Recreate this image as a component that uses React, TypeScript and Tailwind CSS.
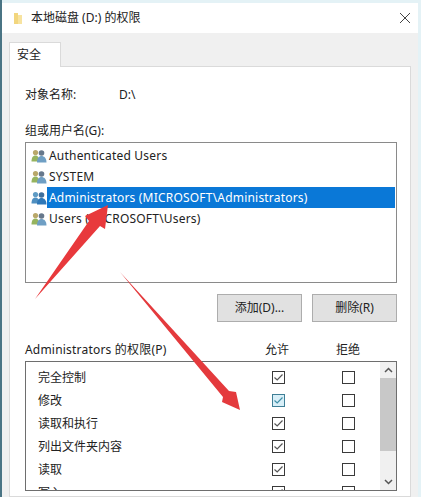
import React from 'react';

const font = { fontFamily: '"Noto Sans", "Noto Sans CJK SC", sans-serif' };

const users = [
  { name: 'Authenticated Users', selected: false },
  { name: 'SYSTEM', selected: false },
  { name: 'Administrators (MICROSOFT\\Administrators)', selected: true },
  { name: 'Users (MICROSOFT\\Users)', selected: false },
];

const perms = [
  { name: '完全控制', hot: false },
  { name: '修改', hot: true },
  { name: '读取和执行', hot: false },
  { name: '列出文件夹内容', hot: false },
  { name: '读取', hot: false },
  { name: '写入', hot: false },
];

const UsersIcon: React.FC<{ selected: boolean }> = ({ selected }) => (
  <svg width="16" height="14" viewBox="0 0 16 14" className="shrink-0">
    <circle cx="4.5" cy="3.5" r="2.6" fill={selected ? '#5f9bc4' : '#b9a86a'} />
    <path d="M0.5 12.5 C0.5 8 2.5 6.5 4.5 6.5 C6.5 6.5 8 8 8 12.5 Z" fill={selected ? '#4f8fc0' : '#96b45f'} />
    <circle cx="10.5" cy="4" r="2.8" fill={selected ? '#3f6f9c' : '#66788c'} />
    <path d="M6 13.5 C6 9 8 7 10.5 7 C13 7 15.5 9 15.5 13.5 Z" fill={selected ? '#2f78b8' : '#6f9fc4'} />
  </svg>
);

const Check: React.FC<{ on: boolean; hot?: boolean }> = ({ on, hot }) => (
  <span
    className={`flex h-[13px] w-[13px] shrink-0 items-center justify-center border ${
      hot ? 'border-[#3f7f96] bg-[#d8eff8]' : 'border-[#3a3a3a] bg-white'
    }`}
  >
    {on && (
      <svg width="11" height="11" viewBox="0 0 11 11" fill="none">
        <path d="M1.5 5.5 L4.2 8 L9.5 2.5" stroke={hot ? '#3f8fa8' : '#555555'} strokeWidth="1.2" />
      </svg>
    )}
  </span>
);

export default function App() {
  return (
    <div className="relative flex h-[497px] w-[421px] overflow-hidden bg-[#e4f2f6]" style={font}>
      <div className="w-[2px] shrink-0 bg-[#4a7484]" />

      <div className="flex min-w-0 flex-1 flex-col pr-[3px] pt-[3px]">
        {/* title bar */}
        <div className="flex h-[30px] shrink-0 items-center bg-white pl-[11px] pr-[7px]">
          <svg width="10" height="13" viewBox="0 0 10 13" className="shrink-0">
            <path d="M1 1 H5 V12 H1 Z" fill="#f2d67e" />
            <path d="M5 3 H9 V12 H5 Z" fill="#f7e3a0" />
          </svg>
          <span className="ml-[8px] text-[12px] leading-none text-[#222222]">本地磁盘 (D:) 的权限</span>
          <svg width="12" height="12" viewBox="0 0 12 12" className="ml-auto" fill="none">
            <path d="M1 1 L11 11 M11 1 L1 11" stroke="#444444" strokeWidth="1" />
          </svg>
        </div>

        {/* body */}
        <div className="flex min-h-0 flex-1 flex-col bg-[#f0f0f0] pl-[7px] pr-[7px] pt-[9px]">
          <div className="z-10 -mb-px flex h-[25px] w-[52px] items-center border border-b-0 border-[#dadada] bg-white pl-[7px] text-[12px] text-[#222222]">
            安全
          </div>

          <div className="flex min-h-0 flex-1 flex-col border border-[#dadada] bg-white pl-[15px] pr-[13px]">
            <div className="mt-[20px] flex h-[16px] items-center text-[12px] text-[#222222]">
              <span className="w-[94px]">对象名称:</span>
              <span>D:\</span>
            </div>

            <div className="mt-[20px] flex h-[16px] items-center text-[12px] text-[#222222]">组或用户名(G):</div>

            {/* user list */}
            <div className="mt-[3px] flex h-[141px] shrink-0 flex-col border border-[#8a8a8a] bg-white pl-[5px] pr-[1px] pt-[2px]">
              {users.map((u) => (
                <div key={u.name} className="flex h-[21px] shrink-0 items-center">
                  <UsersIcon selected={u.selected} />
                  <span
                    className={`flex h-full flex-1 items-center pl-[2px] text-[12px] tracking-[0.2px] ${
                      u.selected ? 'bg-[#0a78d7] text-white' : 'text-[#222222]'
                    }`}
                  >
                    {u.name}
                  </span>
                </div>
              ))}
            </div>

            <div className="mt-[11px] flex shrink-0 justify-end gap-[10px]">
              <button className="h-[28px] w-[85px] border border-[#adadad] bg-[#e1e1e1] text-[12px] text-[#222222]">添加(D)...</button>
              <button className="h-[28px] w-[85px] border border-[#adadad] bg-[#e1e1e1] text-[12px] text-[#222222]">删除(R)</button>
            </div>

            {/* permissions */}
            <div className="mt-[20px] flex h-[16px] shrink-0 items-center text-[12px] text-[#222222]">
              <span className="w-[240px] tracking-[0.2px]">Administrators 的权限(P)</span>
              <span className="w-[71px]">允许</span>
              <span>拒绝</span>
            </div>

            <div className="mt-[3px] flex h-[130px] shrink-0 overflow-hidden border border-[#6e6e6e] bg-white">
              <div className="flex min-w-0 flex-1 flex-col pt-[4px]">
                {perms.map((p) => (
                  <div key={p.name} className="flex h-[23px] shrink-0 items-center pl-[12px] text-[12px] text-[#222222]">
                    <span className="w-[234px]">{p.name}</span>
                    <Check on hot={p.hot} />
                    <span className="w-[57px]" />
                    <Check on={false} />
                  </div>
                ))}
              </div>
              <div className="flex w-[16px] shrink-0 flex-col bg-[#f0f0f0]">
                <div className="flex h-[16px] items-center justify-center">
                  <svg width="9" height="6" viewBox="0 0 9 6" fill="none">
                    <path d="M1 5 L4.5 1.5 L8 5" stroke="#555555" strokeWidth="1.5" />
                  </svg>
                </div>
                <div className="h-[73px] bg-[#c8c8c8]" />
                <div className="mt-auto flex h-[17px] items-center justify-center">
                  <svg width="9" height="6" viewBox="0 0 9 6" fill="none">
                    <path d="M1 1 L4.5 4.5 L8 1" stroke="#555555" strokeWidth="1.5" />
                  </svg>
                </div>
              </div>
            </div>
          </div>
        </div>
      </div>

      {/* red annotation arrows */}
      <svg width="421" height="497" viewBox="0 0 421 497" className="pointer-events-none absolute left-0 top-0 z-20">
        <path d="M35 299 L89 221 L85 216 L108 205 L105 229 L100 226 Z" fill="#e8393c" />
        <path d="M120 272 L223 397 L222 402 L240 410 L236 392 L229 391 Z" fill="#e43a3d" />
      </svg>
    </div>
  );
}
